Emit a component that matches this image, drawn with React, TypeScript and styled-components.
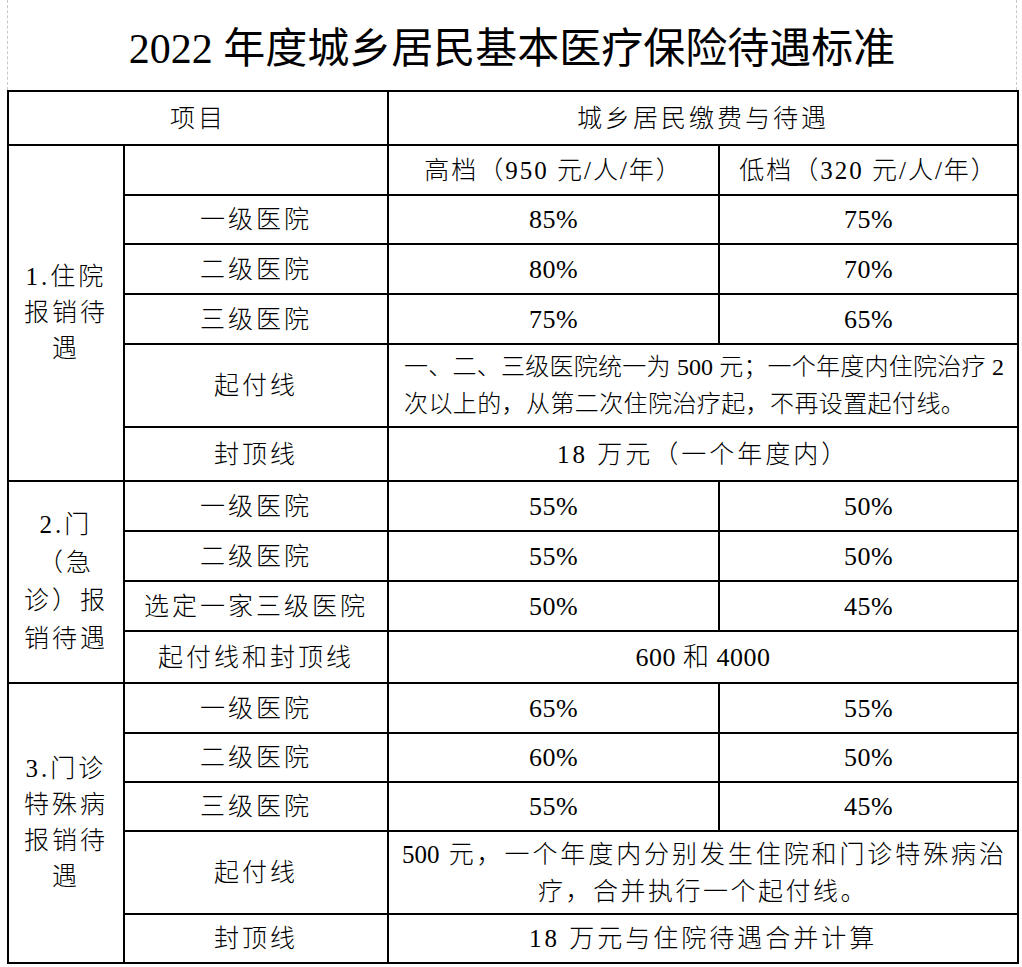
import React from "react";
import styled, { createGlobalStyle } from "styled-components";

const GlobalStyle = createGlobalStyle`
  html, body {
    margin: 0;
    padding: 0;
    background: #fff;
  }
  body {
    font-family: "Liberation Serif", "Noto Sans CJK SC", serif;
    color: #000;
  }
`;

const Page = styled.div`
  width: 1022px;
  height: 967px;
  padding-left: 7px;
  box-sizing: border-box;
`;

const TitleBar = styled.h1`
  margin: 0;
  width: 1010px;
  height: 90px;
  box-sizing: border-box;
  border-left: 1px dashed #c8c8c8;
  border-right: 1px dashed #c8c8c8;
  display: flex;
  align-items: center;
  justify-content: center;
  padding-bottom: 2px;
  font-size: 42px;
  font-weight: 400;
  letter-spacing: 0;
`;

const Sheet = styled.table`
  width: 1010px;
  border-collapse: collapse;
  table-layout: fixed;
  font-weight: 300;
`;

const Row = styled.tr<{ $h: number }>`
  height: ${(p) => p.$h}px;
`;

const Cell = styled.td<{ $size?: number; $spacing?: number; $align?: "left" | "center" }>`
  border: 2px solid #000;
  padding: 0 13px;
  text-align: ${(p) => p.$align ?? "center"};
  vertical-align: middle;
  font-size: ${(p) => p.$size ?? 25}px;
  letter-spacing: ${(p) => p.$spacing ?? 3}px;
  line-height: 37px;
  white-space: nowrap;
`;

const SectionLines = styled.div<{ $lh: number }>`
  line-height: ${(p) => p.$lh}px;
  white-space: nowrap;
`;

// a line stretched to the full cell width, like Word's justified paragraph
const JustLine = styled.span<{ $last?: "justify" | "left" | "center"; $spacing?: number }>`
  display: block;
  white-space: normal;
  text-align: justify;
  text-align-last: ${(p) => p.$last ?? "justify"};
  letter-spacing: ${(p) => p.$spacing ?? 0}px;
`;

const rate = (hi: string, lo: string) => (
  <>
    <Cell $size={26} $spacing={0.5}>{hi}</Cell>
    <Cell $size={26} $spacing={0.5}>{lo}</Cell>
  </>
);

const Section = ({ lines, rows, lh }: { lines: string[]; rows: number; lh: number }) => (
  <Cell rowSpan={rows} $spacing={3} style={{ padding: "0 6px" }}>
    <SectionLines $lh={lh}>
      {lines.map((l, i) => (
        <div key={i}>{l}</div>
      ))}
    </SectionLines>
  </Cell>
);

export default function App() {
  return (
    <Page>
      <GlobalStyle />
      <TitleBar>2022 年度城乡居民基本医疗保险待遇标准</TitleBar>
      <Sheet>
        <colgroup>
          <col style={{ width: 116 }} />
          <col style={{ width: 264 }} />
          <col style={{ width: 331 }} />
          <col style={{ width: 299 }} />
        </colgroup>
        <tbody>
          <Row $h={54}>
            <Cell colSpan={2}>项目</Cell>
            <Cell colSpan={2}>城乡居民缴费与待遇</Cell>
          </Row>

          <Row $h={50}>
            <Section rows={6} lh={36} lines={["1.住院", "报销待", "遇"]} />
            <Cell />
            <Cell $size={25} $spacing={2}>高档（950 元/人/年）</Cell>
            <Cell $size={25} $spacing={2}>低档（320 元/人/年）</Cell>
          </Row>
          <Row $h={49}>
            <Cell>一级医院</Cell>
            {rate("85%", "75%")}
          </Row>
          <Row $h={50}>
            <Cell>二级医院</Cell>
            {rate("80%", "70%")}
          </Row>
          <Row $h={50}>
            <Cell>三级医院</Cell>
            {rate("75%", "65%")}
          </Row>
          <Row $h={83}>
            <Cell>起付线</Cell>
            <Cell colSpan={2} $align="left" $size={24} $spacing={0} style={{ padding: "0 13px 0 15px" }}>
              <JustLine>一、二、三级医院统一为 500 元；一个年度内住院治疗 2</JustLine>
              <JustLine $last="left" $spacing={0.4}>次以上的，从第二次住院治疗起，不再设置起付线。</JustLine>
            </Cell>
          </Row>
          <Row $h={54}>
            <Cell>封顶线</Cell>
            <Cell colSpan={2}>18 万元（一个年度内）</Cell>
          </Row>

          <Row $h={50}>
            <Section rows={4} lh={38} lines={["2.门", "（急", "诊）报", "销待遇"]} />
            <Cell>一级医院</Cell>
            {rate("55%", "50%")}
          </Row>
          <Row $h={50}>
            <Cell>二级医院</Cell>
            {rate("55%", "50%")}
          </Row>
          <Row $h={50}>
            <Cell>选定一家三级医院</Cell>
            {rate("50%", "45%")}
          </Row>
          <Row $h={52}>
            <Cell>起付线和封顶线</Cell>
            <Cell colSpan={2} $size={26} $spacing={0.5}>600 和 4000</Cell>
          </Row>

          <Row $h={50}>
            <Section rows={5} lh={36} lines={["3.门诊", "特殊病", "报销待", "遇"]} />
            <Cell>一级医院</Cell>
            {rate("65%", "55%")}
          </Row>
          <Row $h={49}>
            <Cell>二级医院</Cell>
            {rate("60%", "50%")}
          </Row>
          <Row $h={49}>
            <Cell>三级医院</Cell>
            {rate("55%", "45%")}
          </Row>
          <Row $h={83}>
            <Cell>起付线</Cell>
            <Cell colSpan={2} $spacing={0}>
              <JustLine>500 元，一个年度内分别发生住院和门诊特殊病治</JustLine>
              <JustLine $last="center" $spacing={2.5}>疗，合并执行一个起付线。</JustLine>
            </Cell>
          </Row>
          <Row $h={49}>
            <Cell>封顶线</Cell>
            <Cell colSpan={2}>18 万元与住院待遇合并计算</Cell>
          </Row>
        </tbody>
      </Sheet>
    </Page>
  );
}
